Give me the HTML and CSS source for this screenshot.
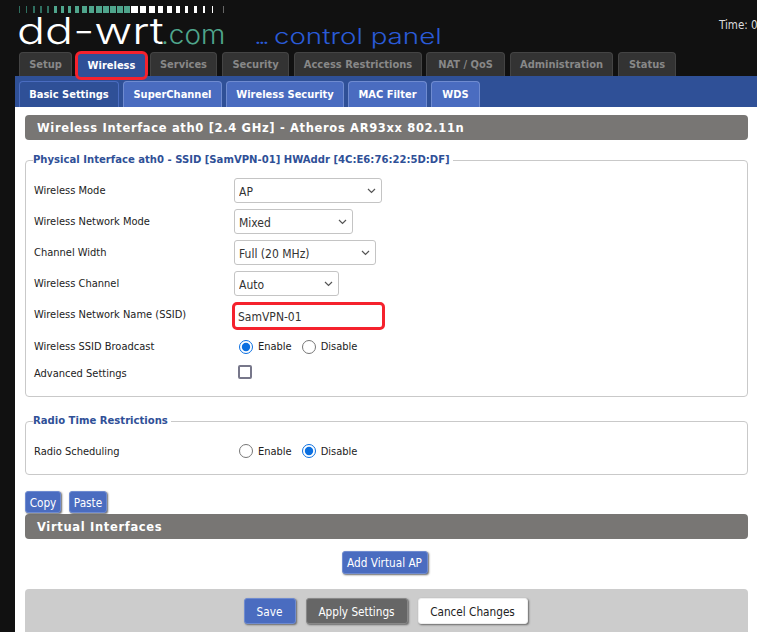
FILE: index.html
```html
<!DOCTYPE html>
<html lang="en">
<head>
  <meta charset="UTF-8" />
  <title>DD-WRT Wireless</title>
  <link rel="stylesheet" href="styles.css">
</head>
<body>

<div class="header">
  <svg class="ticks" width="210" height="8" viewBox="0 0 210 8">
    <g fill="#2f6f60">
      <rect x="4" width="1" height="7"/><rect x="11" width="1" height="7"/><rect x="18" width="2" height="7"/><rect x="25" width="2" height="7"/><rect x="32" width="2" height="7"/>
    </g>
    <g fill="#4fa58c">
      <rect x="39" width="3" height="7"/><rect x="46" width="3" height="7"/><rect x="53" width="3" height="7"/><rect x="60" width="4" height="7"/><rect x="67" width="5" height="7"/><rect x="74" width="5" height="7"/><rect x="81" width="6" height="7"/><rect x="88" width="6" height="7"/><rect x="95" width="6" height="7"/><rect x="102" width="6" height="7"/><rect x="109" width="6" height="7"/>
    </g>
    <g fill="#fff">
      <rect x="116" width="7" height="7"/><rect x="125" width="6" height="7"/><rect x="134" width="6" height="7"/><rect x="143" width="5" height="7"/><rect x="152" width="5" height="7"/><rect x="161" width="4" height="7"/><rect x="170" width="3" height="7"/><rect x="179" width="3" height="7"/><rect x="188" width="2" height="7"/><rect x="197" width="1" height="7"/>
    </g>
    <rect x="208" width="1" height="7" fill="#666"/>
  </svg>
  <div class="logo"><span class="logo-main">dd-wrt</span><span class="logo-com">.com</span><span class="logo-panel"><span class="logo-dots">...</span> control panel</span></div>
  <div class="time">Time: 0</div>
</div>

<div class="main-tabs">
  <div class="tab">Setup</div>
  <div class="tab tab-active">Wireless</div>
  <div class="tab tab-services">Services</div>
  <div class="tab tab-security">Security</div>
  <div class="tab tab-access">Access Restrictions</div>
  <div class="tab tab-nat">NAT / QoS</div>
  <div class="tab tab-admin">Administration</div>
  <div class="tab tab-status">Status</div>
</div>

<div class="sub-tabs">
  <div class="subtab subtab-active">Basic Settings</div>
  <div class="subtab subtab-super">SuperChannel</div>
  <div class="subtab subtab-sec">Wireless Security</div>
  <div class="subtab subtab-mac">MAC Filter</div>
  <div class="subtab subtab-wds">WDS</div>
</div>

<div class="content">
  <h2 class="bar">Wireless Interface ath0 [2.4 GHz] - Atheros AR93xx 802.11n</h2>

  <fieldset class="group group-phys">
    <legend>Physical Interface ath0 - SSID [SamVPN-01] HWAddr [4C:E6:76:22:5D:DF]</legend>
    <div class="row">
      <label>Wireless Mode</label>
      <select class="sel sel-mode"><option>AP</option></select>
    </div>
    <div class="row">
      <label>Wireless Network Mode</label>
      <select class="sel sel-net"><option>Mixed</option></select>
    </div>
    <div class="row">
      <label>Channel Width</label>
      <select class="sel sel-width"><option>Full (20 MHz)</option></select>
    </div>
    <div class="row">
      <label>Wireless Channel</label>
      <select class="sel sel-chan"><option>Auto</option></select>
    </div>
    <div class="row">
      <label>Wireless Network Name (SSID)</label>
      <input class="ssid" type="text" value="SamVPN-01" />
    </div>
    <div class="row row-radio">
      <label>Wireless SSID Broadcast</label>
      <input type="radio" name="bc" checked /><span class="opt">Enable</span>
      <input type="radio" name="bc" /><span>Disable</span>
    </div>
    <div class="row row-check">
      <label>Advanced Settings</label>
      <input class="check" type="checkbox" />
    </div>
  </fieldset>

  <fieldset class="group group-radio">
    <legend>Radio Time Restrictions</legend>
    <div class="row row-radio">
      <label>Radio Scheduling</label>
      <input type="radio" name="rs" /><span class="opt">Enable</span>
      <input type="radio" name="rs" checked /><span>Disable</span>
    </div>
  </fieldset>

  <div class="copy-row">
    <button class="btn btn-copy">Copy</button>
    <button class="btn btn-paste">Paste</button>
  </div>
  <h2 class="bar">Virtual Interfaces</h2>

  <div class="add-row">
    <button class="btn btn-add">Add Virtual AP</button>
  </div>

  <div class="footer-panel">
    <button class="btn btn-big btn-save">Save</button>
    <button class="btn btn-big btn-apply">Apply Settings</button>
    <button class="btn btn-big btn-cancel">Cancel Changes</button>
  </div>
</div>

</body>
</html>
```

FILE: styles.css
```css
* {
  box-sizing: border-box;
}

html, body {
  height: 632px;
  overflow: hidden;
}

body {
  margin: 0;
  background: #111;
  font-family: "DejaVu Sans", sans-serif;
  font-stretch: condensed;
  font-size: 11px;
  color: #222;
}

.header {
  position: relative;
  height: 52px;
  padding: 6px 0 0 15px;
}

.ticks {
  display: block;
}

.logo {
  display: flex;
  align-items: baseline;
  padding-left: 2px;
  margin-top: -2px;
  height: 38px;
  font-family: "Inter", sans-serif;
  font-stretch: normal;
  white-space: nowrap;
}

.logo > span {
  display: inline-block;
  transform-origin: left bottom;
}

.logo-main {
  width: 144px;
  font-size: 37px;
  font-weight: 300;
  line-height: 38px;
  color: #fff;
  transform: scaleX(1.26);
}

.logo-com {
  width: 93px;
  font-size: 26px;
  font-weight: 300;
  color: #4fa58c;
  transform: scaleX(1.07);
}

.logo-panel {
  font-size: 22px;
  font-weight: 300;
  color: #2a5bd7;
  transform: scaleX(1.26);
}

.logo-dots {
  letter-spacing: -3px;
}

.time {
  position: absolute;
  top: 18px;
  left: 719px;
  font-size: 11.5px;
  color: #ddd;
  white-space: nowrap;
}

.main-tabs {
  display: flex;
  height: 24px;
  padding-left: 19px;
  gap: 4px;
}

.tab {
  display: flex;
  align-items: center;
  justify-content: center;
  width: 53px;
  height: 24px;
  background: #333;
  border: 1px solid #444;
  border-bottom: 0;
  border-radius: 4px 4px 0 0;
  color: #888;
  font-weight: 700;
  white-space: nowrap;
}

.tab-active {
  width: 73px;
  height: 29px;
  margin: -1px 0 0 -1px;
  background: #2f5097;
  border: 3px solid #f5222d;
  border-radius: 6px;
  color: #fff;
  position: relative;
  z-index: 1;
}

.tab-services { width: 67px; margin-left: -2px; }
.tab-security { width: 67px; margin-left: 1px; }
.tab-access { width: 128px; margin-left: 1px; }
.tab-nat { width: 79px; }
.tab-admin { width: 103px; margin-left: 1px; }
.tab-status { width: 58px; margin-left: 1px; }

.sub-tabs {
  display: flex;
  align-items: flex-end;
  gap: 4px;
  height: 31px;
  margin-left: 15px;
  padding-left: 4px;
  background: #2f5097;
}

.subtab {
  display: flex;
  align-items: center;
  justify-content: center;
  width: 100px;
  height: 26px;
  background: #4a6cc0;
  border: 1px solid #6f8bd0;
  border-bottom: 0;
  border-radius: 4px 4px 0 0;
  color: #fff;
  font-weight: 700;
  white-space: nowrap;
}

.subtab-active {
  background: #2f5097;
  border-color: #4a6cc0;
}

.subtab-super { width: 99px; }
.subtab-sec { width: 118px; }
.subtab-mac { width: 79px; }
.subtab-wds { width: 49px; }

.content {
  margin-left: 15px;
  height: 525px;
  padding: 8px 9px 0 10px;
  background: #fff;
}

.bar {
  margin: 0;
  height: 25px;
  padding-left: 12px;
  background: #787674;
  border-radius: 4px;
  color: #fff;
  font-size: 11.5px;
  font-stretch: normal;
  font-weight: 700;
  line-height: 27px;
  letter-spacing: 0.66px;
}

.group {
  margin: 13px 0 0;
  padding: 8px 8px 0;
  border: 1px solid #c9c9c9;
  border-radius: 4px;
}

.group legend {
  padding: 0 3px 0 0;
  margin-left: -1px;
  color: #2f5097;
  font-size: 11.2px;
  font-weight: 700;
  line-height: 14px;
}

.group-phys {
  height: 244px;
}

.group-radio {
  height: 61px;
  margin-top: 17px;
  padding-top: 9px;
}

.row {
  display: flex;
  align-items: center;
  height: 31px;
}

.row label {
  width: 200px;
  flex: none;
}

.sel {
  appearance: none;
  height: 25px;
  padding: 2px 0 0 4px;
  background: #fff url("data:image/svg+xml,%3Csvg xmlns='http://www.w3.org/2000/svg' width='9' height='6'%3E%3Cpath d='M1 1l3.5 3.5L8 1' fill='none' stroke='%23555' stroke-width='1.2'/%3E%3C/svg%3E") no-repeat right 5px center;
  border: 1px solid #c4c4c4;
  border-radius: 3px;
  font: inherit;
  font-size: 12px;
  color: #333;
}

.sel-mode { width: 148px; }
.sel-net { width: 119px; }
.sel-width { width: 142px; }
.sel-chan { width: 105px; }

.ssid {
  width: 153px;
  height: 28px;
  margin: 2px 0 0 -2px;
  padding: 2px 3px 0;
  border: 3px solid #f5222d;
  border-radius: 5px;
  outline: 0;
  font: inherit;
  font-size: 12px;
  color: #333;
}

.row-radio input {
  width: 14px;
  height: 14px;
  margin: 0 5px;
  accent-color: #0b6fe0;
}

.opt {
  margin-right: 5px;
}

.row-radio {
  height: 33px;
}

.row-check {
  height: 21px;
}

.check {
  appearance: none;
  width: 14px;
  height: 14px;
  margin: 0 0 4px 4px;
  border: 2px solid #77778a;
  border-radius: 2px;
  background: #fff;
}

.group-radio .row-radio {
  height: 28px;
}

.copy-row {
  display: flex;
  gap: 8px;
  margin-top: 16px;
  height: 23px;
}

.btn {
  height: 23px;
  padding: 1px 0 0;
  background: #4a6cc0;
  border: 1px solid #6f8bd0;
  border-radius: 3px;
  box-shadow: 1px 1px 2px #666;
  color: #fff;
  font: inherit;
  font-size: 11.7px;
}

.btn-copy { width: 36px; height: 22px; }
.btn-paste { width: 38px; height: 22px; }

.add-row {
  display: flex;
  justify-content: center;
  margin-top: 12px;
  padding-right: 4px;
}

.btn-add {
  width: 86px;
}

.footer-panel {
  display: flex;
  justify-content: center;
  gap: 10px;
  height: 60px;
  margin-top: 15px;
  padding: 9px 2px 0 0;
  background: #ccc;
  border-radius: 4px;
}

.btn-big {
  height: 26px;
}

.btn-save { width: 52px; }
.btn-apply { width: 102px; background: #666; border-color: #888; }
.btn-cancel { width: 110px; background: #fff; border-color: #eee; color: #222; }
```
